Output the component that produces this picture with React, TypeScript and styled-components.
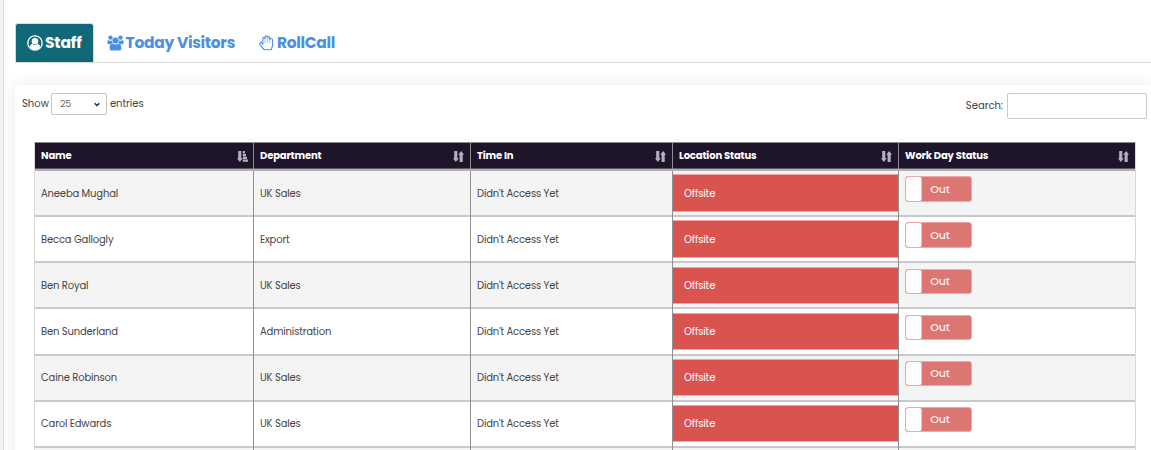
import React from "react";
import styled, { createGlobalStyle } from "styled-components";

const GlobalStyle = createGlobalStyle`
  * { box-sizing: border-box; }
  html, body { margin: 0; height: 450px; overflow: hidden; background: #fff; }
  body {
    font-family: Poppins, Inter, "Open Sans", sans-serif;
    font-size: 10px;
    color: #444;
  }
`;

const Page = styled.div`
  display: flex;
  width: 1151px;
  height: 450px;
  overflow: hidden;
`;

const SideEdge = styled.div`
  flex: 0 0 4px;
  background: #f4f4f4;
  border-right: 1px solid #dcdcdc;
`;

const Main = styled.main`
  flex: 1;
  min-width: 0;
  padding: 23px 0 0 11px;
`;

const Tabs = styled.nav`
  display: flex;
  height: 40px;
  border-bottom: 1px solid #d9d9d9;
`;

const Tab = styled.a<{ $active?: boolean; $pad: number; $gap: number; $spacing: number }>`
  display: flex;
  align-items: center;
  gap: ${(p) => p.$gap}px;
  height: 39px;
  padding: 0 11px 0 ${(p) => p.$pad}px;
  border: 1px solid ${(p) => (p.$active ? "#d3dcde" : "transparent")};
  border-bottom: 0;
  border-radius: 3px 3px 0 0;
  background: ${(p) => (p.$active ? "#106878" : "transparent")};
  color: ${(p) => (p.$active ? "#fff" : "#4a90e2")};
  font-size: 15.5px;
  font-weight: 700;
  letter-spacing: ${(p) => p.$spacing}px;
  white-space: nowrap;
  line-height: 36px;
  svg { flex: none; display: block; }
`;

const Card = styled.section`
  margin-top: 22px;
  height: 500px;
  background: #fff;
  box-shadow: 0 0 14px rgba(0, 0, 0, 0.09);
`;

const Controls = styled.div`
  display: flex;
  justify-content: space-between;
  height: 56.5px;
  padding: 8px 4px 0 7px;
`;

const Control = styled.label`
  display: flex;
  height: 26px;
  line-height: 22px;
`;

const PageSize = styled.span`
  display: flex;
  justify-content: space-between;
  align-items: center;
  width: 56px;
  height: 22px;
  margin: 0 3px 0 2px;
  padding: 0 6px 0 8px;
  border: 1px solid #c5c5c5;
  border-radius: 2px;
  font-size: 9.5px;
  color: #666;
`;

const SearchInput = styled.input`
  width: 140px;
  height: 26px;
  margin-left: 4px;
  border: 1px solid #c8c8c8;
  border-radius: 2px;
  background: #fff;
`;

const SearchLabel = styled.span`
  padding-top: 2px;
`;

const Table = styled.div`
  width: 1102px;
  margin-left: 19px;
  border: 1px solid #d9d9d9;
  border-top: 1px solid #8f8b95;
`;

const Row = styled.div<{ $shade?: boolean }>`
  display: grid;
  grid-template-columns: 219px 217px 202px 226px 236px;
  height: 46.16px;
  border-bottom: 2px solid #c9c9c9;
  background: ${(p) => (p.$shade ? "#f4f4f4" : "#fff")};
`;

const HeadRow = styled(Row)`
  height: 28.4px;
  background: #1f152b;
  border-bottom: 2px solid #b3b0b5;
  box-shadow: inset 0 -1px 0 #5f5867;
`;

const HeadCell = styled.div`
  display: flex;
  justify-content: space-between;
  align-items: center;
  padding: 1px 6px 0 6px;
  border-right: 1px solid #8f8f8f;
  color: #fff;
  font-weight: 700;
  letter-spacing: -0.14px;
  &:first-child { padding-right: 5px; }
  &:last-child { border-right: 0; }
`;

const Cell = styled.div`
  margin-bottom: -2px;
  padding: 0.7px 6px 0;
  border-right: 1px solid #8f8f8f;
  line-height: 43px;
  letter-spacing: -0.16px;
  white-space: nowrap;
  &:last-child { border-right: 0; }
`;

const StatusCell = styled(Cell)`
  padding: 3.4px 0 0;
`;

const Status = styled.div`
  height: 37.4px;
  padding: 0.3px 0 0 11px;
  border: solid #efa5a2;
  border-width: 1px 0;
  background: #d9534f;
  color: #fff;
  line-height: 36.2px;
  letter-spacing: -0.1px;
`;

const ToggleCell = styled(Cell)`
  padding-top: 5.3px;
`;

const Toggle = styled.div`
  display: flex;
  width: 67px;
  height: 25.4px;
  border: 1px solid #eda9a7;
  border-radius: 3px;
  background: #db7673;
  overflow: hidden;
`;

const Knob = styled.span`
  width: 16px;
  border-right: 1px solid #e8c8c7;
  border-radius: 2px;
  background: #fdfdfd;
`;

const ToggleText = styled.span`
  flex: 1;
  padding: 0.52px 13px 0 0;
  text-align: center;
  line-height: 22px;
  font-size: 11px;
  letter-spacing: -0.1px;
  font-weight: 500;
  color: #fbeeee;
`;

const UserIcon = () => (
  <svg width="16" height="16" viewBox="0 0 16 16">
    <circle cx="8" cy="8" r="7.2" fill="none" stroke="currentColor" strokeWidth="1.3" />
    <circle cx="8" cy="6.2" r="3.3" fill="currentColor" />
    <path d="M2.6 12.4c.4-2 1.2-3.4 2.7-3.7a4.1 4.1 0 0 0 5.4 0c1.5.3 2.3 1.7 2.7 3.7A6.9 6.9 0 0 1 2.6 12.4z" fill="currentColor" />
  </svg>
);

const UsersIcon = () => (
  <svg width="17" height="16" viewBox="0 0 17 16" fill="currentColor">
    <circle cx="3.5" cy="2.6" r="2.2" />
    <circle cx="13.5" cy="2.6" r="2.2" />
    <path d="M1.3 4.9c1.3 1 2.7 1 3.7.6 0 1.2.2 1.9.8 2.7-1 0-1.8.4-2.5 1.1H2C.9 9.3.4 8.7.4 7.8c0-1.5.2-2.6.9-2.900z" />
    <path d="M15.7 4.9c-1.3 1-2.7 1-3.7.6 0 1.2-.2 1.9-.8 2.7 1 0 1.8.4 2.5 1.1H15c1.1 0 1.6-.6 1.6-1.5 0-1.5-.2-2.6-.9-2.900z" />
    <circle cx="8.5" cy="5.5" r="3.1" />
    <path d="M5.3 8.4c1.9 1.500 4.500 1.500 6.400 0 1.900.1 2.700 2 2.700 4.800 0 1.500-.9 2.300-2.300 2.300H4.900c-1.400 0-2.300-.8-2.300-2.300 0-2.800.8-4.700 2.700-4.800z" />
  </svg>
);

const HandIcon = () => (
  <svg width="15" height="16" viewBox="0 0 15 16" fill="none" stroke="currentColor" strokeWidth="1.1" strokeLinecap="round" strokeLinejoin="round">
    <path d="M3.8 9.500V3.500c0-1.500 2-1.500 2.200 0V2c.1-1.600 2.200-1.600 2.300 0v.7c.2-1.500 2.400-1.400 2.400.2v1.500c.3-1.400 2.900-1.300 2.900.6v5c0 1.200-.7 2.300-.9 3.400 0 .8-.4 1.400-1.200 1.400H6c-.7 0-1.200-.3-1.600-.9L1.100 9.600C.2 8.100 1.600 6.500 2.900 8z" />
    <path d="M6 3.500v4M8.300 2.700v4.800M10.700 4.400v3.100" strokeWidth=".5" />
  </svg>
);

const SortIcon = ({ sorted }: { sorted?: boolean }) => (
  <svg width="11" height="11" viewBox="0 0 11 11" fill="#b5b1ba">
    <path d="M1.200 0h3.100v7.300h1.500L2.800 11 0 7.300h1.200z" />
    {sorted ? (
      <path d="M5.800 0h2.200v2.500H5.800zM5.800 2.900h3.200v2.300H5.800zM5.800 5.700H10v2.300H5.800zM5.800 8.500H11v2.300H5.800z" />
    ) : (
      <path d="M6.600 11h3.100V3.700H11L8.200 0 5.200 3.700h1.400z" />
    )}
  </svg>
);

const Chevron = () => (
  <svg width="6" height="5" viewBox="0 0 6 5" fill="none" stroke="#222" strokeWidth="1.3">
    <path d="M.7 1.200 3 3.500l2.300-2.300" />
  </svg>
);

const columns = ["Name", "Department", "Time In", "Location Status", "Work Day Status"];

const staff = [
  ["Aneeba Mughal", "UK Sales"],
  ["Becca Gallogly", "Export"],
  ["Ben Royal", "UK Sales"],
  ["Ben Sunderland", "Administration"],
  ["Caine Robinson", "UK Sales"],
  ["Carol Edwards", "UK Sales"],
];

export default function App() {
  return (
    <Page>
      <GlobalStyle />
      <SideEdge />
      <Main>
        <Tabs>
          <Tab $active $pad={11} $gap={2} $spacing={-0.2}><UserIcon />Staff</Tab>
          <Tab $pad={12} $gap={2} $spacing={-0.3}><UsersIcon />Today Visitors</Tab>
          <Tab $pad={11} $gap={3} $spacing={-0.35}><HandIcon />RollCall</Tab>
        </Tabs>
        <Card>
          <Controls>
            <Control>
              Show
              <PageSize>25<Chevron /></PageSize>
              entries
            </Control>
            <Control>
              <SearchLabel>Search:</SearchLabel>
              <SearchInput />
            </Control>
          </Controls>
          <Table>
            <HeadRow>
              {columns.map((name, i) => (
                <HeadCell key={name}>{name}<SortIcon sorted={i === 0} /></HeadCell>
              ))}
            </HeadRow>
            {staff.map(([name, department], i) => (
              <Row key={name} $shade={i % 2 === 0}>
                <Cell>{name}</Cell>
                <Cell>{department}</Cell>
                <Cell>Didn't Access Yet</Cell>
                <StatusCell><Status>Offsite</Status></StatusCell>
                <ToggleCell>
                  <Toggle><Knob /><ToggleText>Out</ToggleText></Toggle>
                </ToggleCell>
              </Row>
            ))}
            <Row $shade>
              {columns.map((name) => <Cell key={name} />)}
            </Row>
          </Table>
        </Card>
      </Main>
    </Page>
  );
}
